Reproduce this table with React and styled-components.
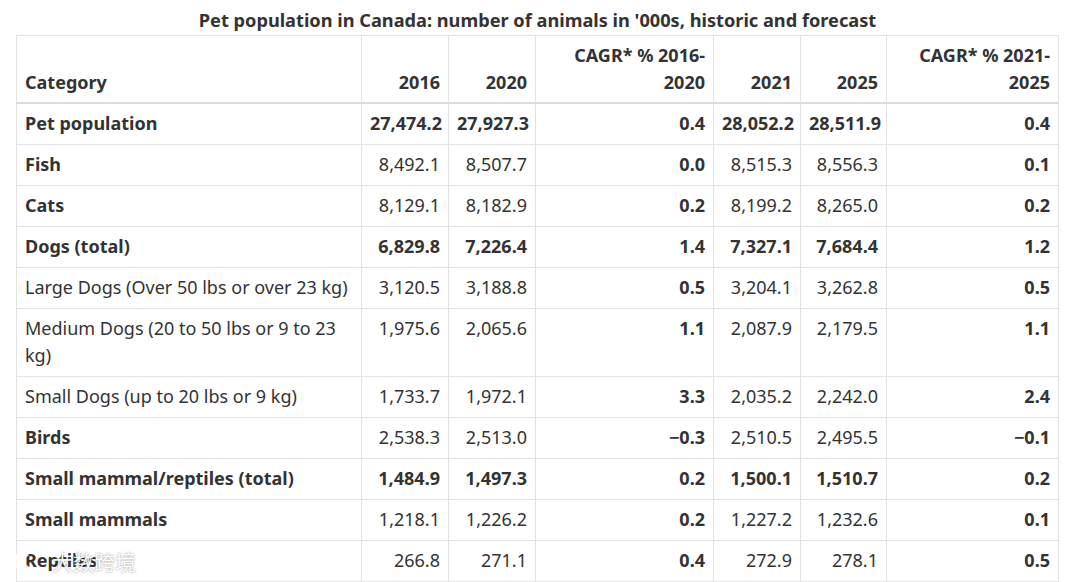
import React from "react";
import styled, { createGlobalStyle } from "styled-components";

const GlobalStyle = createGlobalStyle`
  body {
    margin: 0;
    background: #fff;
    font-family: "Noto Sans", "Open Sans", sans-serif;
    color: #333;
  }
`;

const Page = styled.div`
  position: relative;
  padding: 7px 22px 0 16px;
  width: 1080px;
  box-sizing: border-box;
  height: 582px;
  overflow: hidden;
`;

const Table = styled.table`
  width: 1042px;
  border-collapse: collapse;
  table-layout: fixed;
  font-size: 18px;
  line-height: 27px;
`;

const Caption = styled.caption`
  font-weight: 700;
  font-size: 18.2px;
  line-height: 27px;
  padding-bottom: 1px;
  color: #333;
`;

const Th = styled.th`
  border: 1px solid #e2e2e2;
  border-bottom: 2px solid #dcdcdc;
  padding: 6px 8px;
  text-align: ${(p) => (p.$left ? "left" : "right")};
  vertical-align: bottom;
  font-weight: 700;
`;

const Td = styled.td`
  border: 1px solid #e2e2e2;
  padding: 6px 8px 7px;
  text-align: ${(p) => (p.$left ? "left" : "right")};
  vertical-align: top;
  font-weight: ${(p) => (p.$bold ? 700 : 400)};
  white-space: ${(p) => (p.$left ? "normal" : "nowrap")};
`;

const Watermark = styled.div`
  position: absolute;
  left: 8px;
  top: 546px;
  display: flex;
  align-items: center;
  color: #fff;
  font-family: "Noto Sans CJK SC", sans-serif;
  font-size: 21px;
  text-shadow: 0 0 2px rgba(0, 0, 0, 0.5);
  opacity: 0.92;
  pointer-events: none;
`;

const WatermarkText = styled.span`
  margin-left: 20px;
`;

const rows = [
  { name: "Pet population", cat: true, nums: true, v: ["27,474.2", "27,927.3", "0.4", "28,052.2", "28,511.9", "0.4"] },
  { name: "Fish", cat: true, v: ["8,492.1", "8,507.7", "0.0", "8,515.3", "8,556.3", "0.1"] },
  { name: "Cats", cat: true, v: ["8,129.1", "8,182.9", "0.2", "8,199.2", "8,265.0", "0.2"] },
  { name: "Dogs (total)", cat: true, nums: true, v: ["6,829.8", "7,226.4", "1.4", "7,327.1", "7,684.4", "1.2"] },
  { name: "Large Dogs (Over 50 lbs or over 23 kg)", v: ["3,120.5", "3,188.8", "0.5", "3,204.1", "3,262.8", "0.5"] },
  { name: "Medium Dogs (20 to 50 lbs or 9 to 23 kg)", v: ["1,975.6", "2,065.6", "1.1", "2,087.9", "2,179.5", "1.1"] },
  { name: "Small Dogs (up to 20 lbs or 9 kg)", v: ["1,733.7", "1,972.1", "3.3", "2,035.2", "2,242.0", "2.4"] },
  { name: "Birds", cat: true, v: ["2,538.3", "2,513.0", "\u22120.3", "2,510.5", "2,495.5", "\u22120.1"] },
  { name: "Small mammal/reptiles (total)", cat: true, nums: true, v: ["1,484.9", "1,497.3", "0.2", "1,500.1", "1,510.7", "0.2"] },
  { name: "Small mammals", cat: true, v: ["1,218.1", "1,226.2", "0.2", "1,227.2", "1,232.6", "0.1"] },
  { name: "Reptiles", cat: true, v: ["266.8", "271.1", "0.4", "272.9", "278.1", "0.5"] },
];

const widths = [345, 87, 87, 178, 87, 86, 172];

export default function App() {
  return (
    <Page>
      <GlobalStyle />
      <Table>
        <Caption>Pet population in Canada: number of animals in '000s, historic and forecast</Caption>
        <colgroup>
          {widths.map((w, i) => (
            <col key={i} style={{ width: w }} />
          ))}
        </colgroup>
        <thead>
          <tr>
            <Th $left>Category</Th>
            <Th>2016</Th>
            <Th>2020</Th>
            <Th>CAGR* % 2016-2020</Th>
            <Th>2021</Th>
            <Th>2025</Th>
            <Th>CAGR* % 2021-2025</Th>
          </tr>
        </thead>
        <tbody>
          {rows.map((r) => (
            <tr key={r.name}>
              <Td $left $bold={r.cat}>{r.name}</Td>
              {r.v.map((val, i) => (
                <Td key={i} $bold={i === 2 || i === 5 || r.nums}>
                  {val}
                </Td>
              ))}
            </tr>
          ))}
        </tbody>
      </Table>
      <Watermark>
        <svg width="24" height="24" viewBox="0 0 24 24">
          <path d="M3 5 L3 19" stroke="#fff" strokeWidth="3" fill="none" />
          <path d="M20 7 A7.5 7.5 0 1 0 20 17" stroke="#fff" strokeWidth="3" fill="none" />
        </svg>
        <WatermarkText>大数跨境</WatermarkText>
      </Watermark>
    </Page>
  );
}
